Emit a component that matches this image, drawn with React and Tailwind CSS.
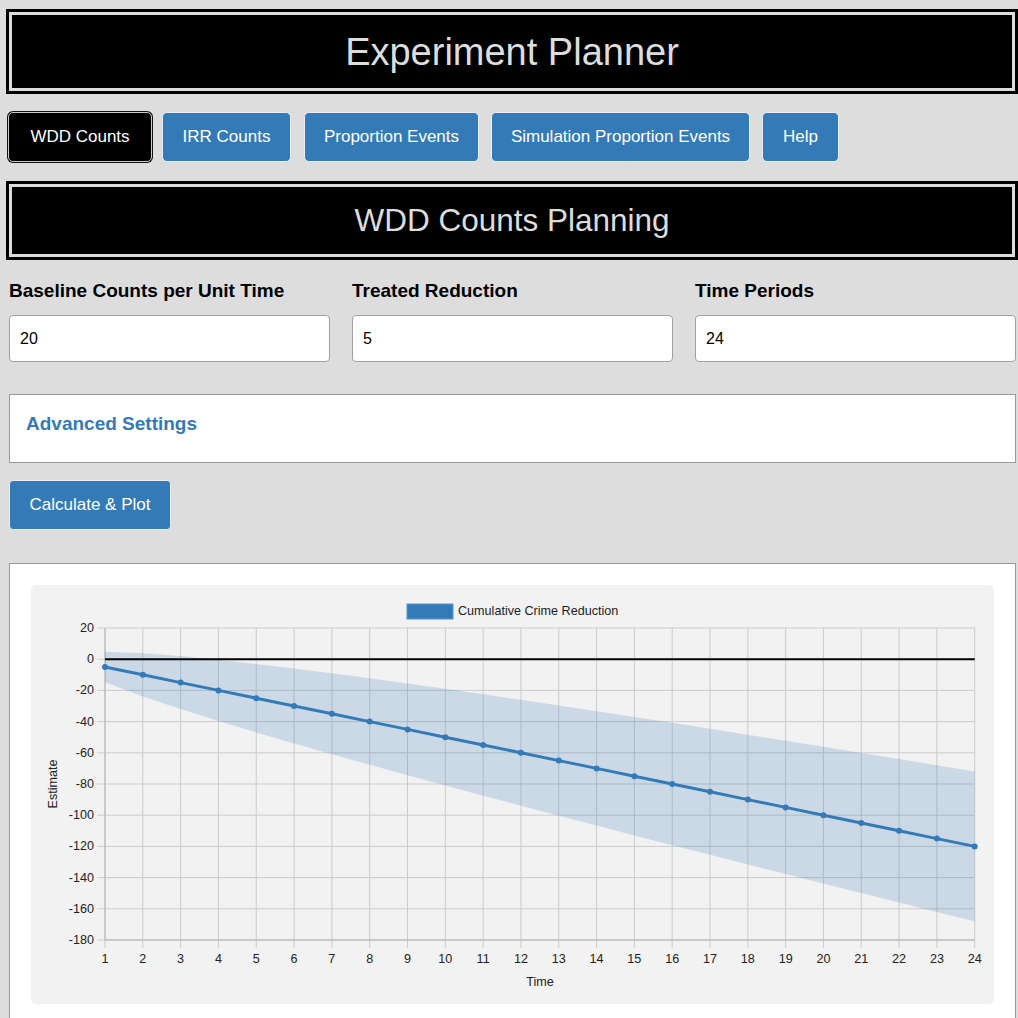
import React, { useState } from "react";

const BLUE = "#337ab7";

// chart geometry, relative to the grey chart panel
const PLOT_L = 74;
const PLOT_R = 943.7;
const PLOT_T = 43;
const PLOT_B = 355;
const FS = 12.6;
const periods = Array.from({ length: 24 }, (_, i) => i + 1);
const yTicks = [20, 0, -20, -40, -60, -80, -100, -120, -140, -160, -180];

const xs = (t) => PLOT_L + ((t - 1) * (PLOT_R - PLOT_L)) / 23;
const ys = (v) => PLOT_T + ((20 - v) * (PLOT_B - PLOT_T)) / 200;

const Chart = ({ baseline, reduction }) => {
  const data = periods.map((t) => {
    const est = -reduction * t;
    const half = 1.96 * Math.sqrt((baseline + reduction) * t);
    return { t, est, hi: est + half, lo: est - half };
  });

  const band =
    data.map((d) => `${xs(d.t)},${ys(d.hi)}`).join(" ") +
    " " +
    [...data].reverse().map((d) => `${xs(d.t)},${ys(d.lo)}`).join(" ");
  const line = data.map((d) => `${xs(d.t)},${ys(d.est)}`).join(" ");

  return (
    <svg width="964" height="419" className="block">
      {/* legend */}
      <rect x="376" y="19" width="46" height="15" fill={BLUE} stroke="#5a93c6" strokeWidth="1" />
      <text x="427" y="30" fontSize={FS} fill="#222">
        Cumulative Crime Reduction
      </text>

      {/* grid */}
      {yTicks.map((v) => (
        <g key={v}>
          <line x1={PLOT_L - 8} x2={PLOT_R} y1={ys(v)} y2={ys(v)} stroke="#cbcbcb" strokeWidth="1" />
          <text x={PLOT_L - 11} y={ys(v) + 4} fontSize={FS} fill="#222" textAnchor="end">
            {v}
          </text>
        </g>
      ))}
      {periods.map((t) => (
        <g key={t}>
          <line x1={xs(t)} x2={xs(t)} y1={PLOT_T} y2={PLOT_B + 8} stroke="#cbcbcb" strokeWidth="1" />
          <text x={xs(t)} y={PLOT_B + 22.5} fontSize={FS} fill="#222" textAnchor="middle">
            {t}
          </text>
        </g>
      ))}
      <line x1={PLOT_L} x2={PLOT_L} y1={PLOT_T} y2={PLOT_B} stroke="#b5b5b5" strokeWidth="1" />
      <line x1={PLOT_L} x2={PLOT_R} y1={PLOT_B} y2={PLOT_B} stroke="#b5b5b5" strokeWidth="1" />

      {/* confidence band */}
      <polygon points={band} fill={BLUE} fillOpacity="0.2" />

      {/* zero line */}
      <line x1={PLOT_L} x2={PLOT_R} y1={ys(0)} y2={ys(0)} stroke="#000" strokeWidth="2" />

      {/* estimate */}
      <polyline points={line} fill="none" stroke={BLUE} strokeWidth="3" />
      {data.map((d) => (
        <circle key={d.t} cx={xs(d.t)} cy={ys(d.est)} r="3" fill={BLUE} />
      ))}

      {/* axis titles */}
      <text x="509" y="401" fontSize={FS} fill="#222" textAnchor="middle">
        Time
      </text>
      <text
        x="0"
        y="0"
        fontSize={FS}
        fill="#222"
        textAnchor="middle"
        transform={`translate(26 ${(PLOT_T + PLOT_B) / 2}) rotate(-90)`}
      >
        Estimate
      </text>
    </svg>
  );
};

const Banner = ({ children, className }) => (
  <div className={`-ml-[3px] w-[1012px] border-[3px] border-black ${className}`}>
    <div className="flex h-full items-center justify-center border-[3px] border-[#ddd] bg-black text-[#ddd]">
      {children}
    </div>
  </div>
);

const tabs = [
  { name: "WDD Counts", w: "w-[144px]", ml: "" },
  { name: "IRR Counts", w: "w-[129px]", ml: "ml-[10px]" },
  { name: "Proportion Events", w: "w-[175px]", ml: "ml-[13px]" },
  { name: "Simulation Proportion Events", w: "w-[259px]", ml: "ml-[12px]" },
  { name: "Help", w: "w-[77px]", ml: "ml-[12px]" },
];

export default function App() {
  const [active, setActive] = useState("WDD Counts");
  const [form, setForm] = useState({ baseline: "20", reduction: "5", periods: "24" });

  const handleChange = (e) => {
    setForm({ ...form, [e.target.name]: e.target.value });
  };

  const fields = [
    { label: "Baseline Counts per Unit Time", name: "baseline" },
    { label: "Treated Reduction", name: "reduction" },
    { label: "Time Periods", name: "periods" },
  ];

  return (
    <div className="min-h-screen overflow-hidden bg-[#ddd] font-['Liberation_Sans',Arial,sans-serif]">
      <div className="w-[1016px] pl-[9px] pt-[9px]">
        <Banner className="h-[85px]">
          <h1 className="text-[38px] leading-none">Experiment Planner</h1>
        </Banner>

        <div className="mt-[18px] -ml-[1px] flex">
          {tabs.map((tab) => (
            <button
              key={tab.name}
              type="button"
              onClick={() => setActive(tab.name)}
              className={`${tab.w} ${tab.ml} h-[50px] rounded-[5px] text-[17px] text-white ${
                active === tab.name
                  ? "border border-[#ccc] bg-black shadow-[0_0_0_1px_#111]"
                  : "border border-[#e8eef5] bg-[#337ab7]"
              }`}
            >
              {tab.name}
            </button>
          ))}
        </div>

        <Banner className="mt-[19px] h-[79px]">
          <h2 className="text-[31.5px] leading-none">WDD Counts Planning</h2>
        </Banner>

        <div className="mt-[20px] grid grid-cols-3 gap-[22px]">
          {fields.map((f) => (
            <div key={f.name}>
              <label className="block h-[22px] text-[19px] font-bold leading-[22px] text-black">
                {f.label}
              </label>
              <input
                type="number"
                name={f.name}
                value={form[f.name]}
                onChange={handleChange}
                className="mt-[13px] block h-[47px] w-full rounded-[4px] border border-[#a0a0a0] bg-white px-[10px] text-[16px] text-black outline-none"
              />
            </div>
          ))}
        </div>

        <div className="mt-[32px] h-[69px] border border-[#999] bg-white pl-[16px] pt-[18px]">
          <h3 className="text-[19px] font-bold leading-[22px] text-[#337ab7]">Advanced Settings</h3>
        </div>

        <button
          type="button"
          className="mt-[17px] block h-[50px] w-[162px] rounded-[4px] border border-[#e8eef5] bg-[#337ab7] text-[17px] text-white"
        >
          Calculate &amp; Plot
        </button>

        <div className="mt-[33px] border border-[#999] bg-white p-[21px]">
          <div className="rounded-[5px] bg-[#f2f2f2]">
            <Chart baseline={Number(form.baseline) || 0} reduction={Number(form.reduction) || 0} />
          </div>
        </div>
      </div>
    </div>
  );
}
